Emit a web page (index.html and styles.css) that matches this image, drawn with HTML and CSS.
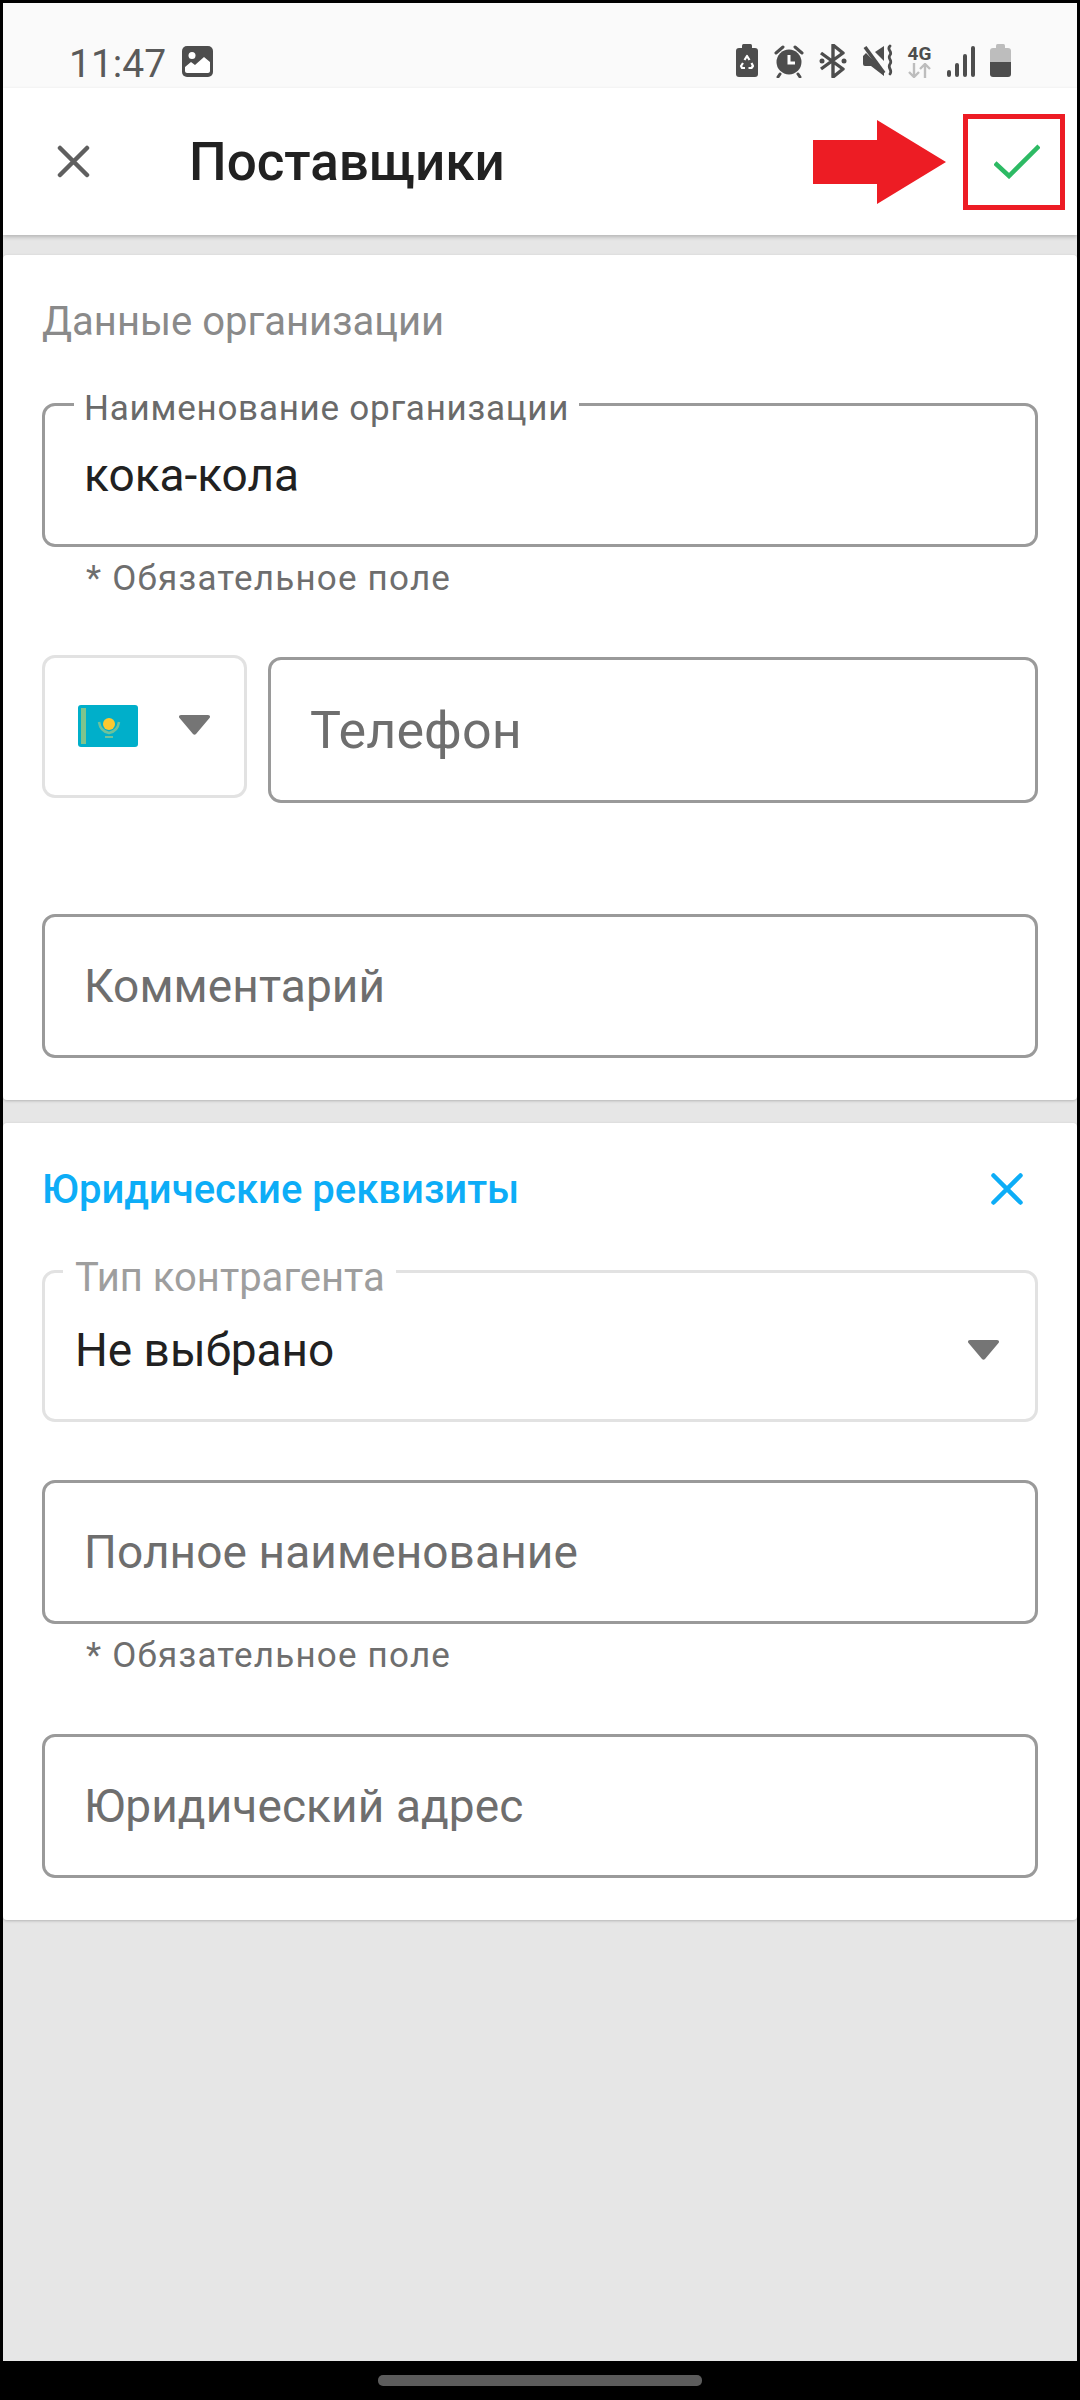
FILE: index.html
```html
<!DOCTYPE html>
<html>
    <head>
        <meta name="viewport" content="width=device-width, initial-scale=1.0">
        <meta charset="utf-8">
        <title>Поставщики</title>
        <link rel="stylesheet" href="styles.css">
    </head>
    <body>
        <div class="screen">
            <div class="statusbar">
                <span class="clock">11:47</span>
                <svg class="ic-image" width="31" height="31" viewBox="0 0 31 31">
                    <rect width="31" height="31" rx="5" fill="#4d4d4d"/>
                    <circle cx="10" cy="9.500" r="3.500" fill="#fff"/>
                    <path d="M3 25v-4l6-5 4 3 9-8 6 5v9c0 1-1 2-2 2H5c-1 0-2-1-2-2z" fill="#fff"/>
                </svg>
                <div class="status-icons">
                    <svg width="22" height="34" viewBox="0 0 22 34">
                        <rect x="6" y="0" width="10" height="6" rx="1.500" fill="#4d4d4d"/>
                        <rect x="0" y="4" width="22" height="29" rx="3" fill="#4d4d4d"/>
                        <path d="M8.500 16l2.500-4 2.500 4M15.500 19l1.500 3-1.500 2h-3M9 24H6l-1-2 2-3" fill="none" stroke="#fff" stroke-width="2.200" stroke-linejoin="round"/>
                    </svg>
                    <svg width="30" height="34" viewBox="0 0 30 34">
                        <circle cx="15" cy="18" r="12.500" fill="#4d4d4d"/>
                        <path d="M15 11v8h6" fill="none" stroke="#fff" stroke-width="3"/>
                        <path d="M2 9l7-6M28 9l-7-6M6 30l-2 3M24 30l2 3" fill="none" stroke="#4d4d4d" stroke-width="3" stroke-linecap="round"/>
                    </svg>
                    <svg width="28" height="34" viewBox="0 0 28 34">
                        <path d="M2 9l22 16-10 8V1l10 8L2 25" fill="none" stroke="#4d4d4d" stroke-width="3.400" stroke-linejoin="round"/>
                        <circle cx="3" cy="17" r="2.500" fill="#4d4d4d"/>
                        <circle cx="25" cy="17" r="2.500" fill="#4d4d4d"/>
                    </svg>
                    <svg width="30" height="34" viewBox="0 0 30 34">
                        <path d="M12 8l9-6v15z" fill="#4d4d4d"/>
                        <path d="M3 9L0 12v8a2 2 0 0 0 2 2h6l13 10v-5z" fill="#4d4d4d"/>
                        <path d="M2 3l19 26" stroke="#4d4d4d" stroke-width="3.600"/>
                        <path d="M27 2c-4 4 3 5 0 9s3 5 0 9 3 6 0 10" fill="none" stroke="#4d4d4d" stroke-width="2.800" stroke-linecap="round"/>
                    </svg>
                    <div class="net">
                        <span class="net-label">4G</span>
                        <svg width="23" height="15" viewBox="0 0 23 15">
                            <path d="M6 0v14M1 9l5 5 5-5M17 15V1M12 6l5-5 5 5" fill="none" stroke="#bdbdbd" stroke-width="2.400"/>
                        </svg>
                    </div>
                    <svg width="28" height="34" viewBox="0 0 28 34">
                        <rect x="0" y="26" width="4" height="7" rx="2" fill="#4d4d4d"/>
                        <rect x="8" y="19" width="4" height="14" rx="2" fill="#4d4d4d"/>
                        <rect x="16" y="10" width="4" height="23" rx="2" fill="#4d4d4d"/>
                        <rect x="24" y="2" width="4" height="31" rx="2" fill="#4d4d4d"/>
                    </svg>
                    <svg width="21" height="34" viewBox="0 0 21 34">
                        <rect x="6" y="0" width="9" height="6" rx="1.500" fill="#bdbdbd"/>
                        <path d="M3 4h15a3 3 0 0 1 3 3v11H0V7a3 3 0 0 1 3-3z" fill="#bdbdbd"/>
                        <path d="M0 18h21v12a3 3 0 0 1-3 3H3a3 3 0 0 1-3-3z" fill="#4d4d4d"/>
                    </svg>
                </div>
            </div>

            <div class="appbar">
                <svg class="close" width="33" height="33" viewBox="0 0 33 33">
                    <path d="M3 3l27 27M30 3L3 30" stroke="#5f5f5f" stroke-width="4.500" stroke-linecap="round"/>
                </svg>
                <div class="title">Поставщики</div>
                <svg class="arrow" width="134" height="84" viewBox="0 0 134 84">
                    <path d="M1 20h64V0l69 42-69 42V64H1z" fill="#ed1c24"/>
                </svg>
                <div class="save">
                    <svg width="46" height="35" viewBox="0 0 46 35">
                        <path d="M1 19l14 13L45 2" fill="none" stroke="#2dba64" stroke-width="4.500"/>
                    </svg>
                </div>
            </div>

            <div class="card first">
                <div class="heading">Данные организации</div>
                <div class="field org">
                    <label class="float">Наименование организации</label>
                    <span class="value">кока-кола</span>
                </div>
                <div class="hint">* Обязательное поле</div>
                <div class="phone-row">
                    <div class="country">
                        <svg width="60" height="42" viewBox="0 0 60 42">
                            <rect width="60" height="42" rx="3" fill="#00afca"/>
                            <rect x="3" y="3" width="5" height="36" fill="#7fc48c"/>
                            <circle cx="31" cy="19" r="6" fill="#fdc82f"/>
                            <path d="M21 17c1 7 5 10 10 11 5-1 9-4 10-11" fill="none" stroke="#6fc29a" stroke-width="2.500"/>
                            <path d="M27 32h8" stroke="#6fc29a" stroke-width="2"/>
                        </svg>
                        <svg class="caret" width="31" height="20" viewBox="0 0 31 20">
                            <path d="M2 0h27c2 0 2.500 2 1.500 3L17 19c-1 1-2 1-3 0L.5 3C-.5 2 0 0 2 0z" fill="#757575"/>
                        </svg>
                    </div>
                    <div class="field phone"><span class="placeholder">Телефон</span></div>
                </div>
                <div class="field comment"><span class="placeholder">Комментарий</span></div>
            </div>

            <div class="card second">
                <div class="legal-head">
                    <span class="legal-title">Юридические реквизиты</span>
                    <svg width="32" height="32" viewBox="0 0 32 32">
                        <path d="M2.500 2.500l27 27M29.500 2.500l-27 27" stroke="#0dadf7" stroke-width="4.500" stroke-linecap="round"/>
                    </svg>
                </div>
                <div class="field select">
                    <label class="float muted">Тип контрагента</label>
                    <span class="value">Не выбрано</span>
                    <svg class="caret" width="31" height="20" viewBox="0 0 31 20">
                        <path d="M2 0h27c2 0 2.500 2 1.500 3L17 19c-1 1-2 1-3 0L.5 3C-.5 2 0 0 2 0z" fill="#757575"/>
                    </svg>
                </div>
                <div class="field fullname"><span class="placeholder">Полное наименование</span></div>
                <div class="hint">* Обязательное поле</div>
                <div class="field address"><span class="placeholder">Юридический адрес</span></div>
            </div>
        </div>
        <div class="navbar"><div class="home"></div></div>
    </body>
</html>
```

FILE: styles.css
```css
*{
    box-sizing:border-box;
}
html,body{
    margin:0;
    height:2400px;
    background-color:black;
    overflow:hidden;
}
body{
    padding:3px 3px 0;
    font-family:Roboto,"Noto Sans",sans-serif;
}
.screen{
    height:2358px;
    background-color:#e6e6e6;
    display:flex;
    flex-direction:column;
}

/* status bar */
.statusbar{
    height:85px;
    flex:none;
    background-color:#fafafa;
    display:flex;
    align-items:flex-start;
    padding:41px 0 0 66px;
}
.clock{
    width:96px;
    font-size:39px;
    line-height:40px;
    color:#5a5a5a;
}
.ic-image{
    margin:2px 0 0 17px;
}
.status-icons{
    margin-left:auto;
    margin-right:66px;
    display:flex;
    gap:15.5px;
    color:#4d4d4d;
}
.net{
    width:23px;
    height:34px;
    display:flex;
    flex-direction:column;
    align-items:center;
}
.net-label{
    font-size:19px;
    line-height:19px;
    font-weight:700;
    color:#4d4d4d;
}

/* app bar */
.appbar{
    height:147px;
    flex:none;
    background-color:white;
    display:flex;
    align-items:center;
    padding-left:54px;
    box-shadow:0 2px 4px rgba(0,0,0,.22);
    position:relative;
}
.title{
    margin-left:99px;
    font-size:53px;
    font-weight:500;
    color:#212121;
}
.arrow{
    margin-left:auto;
    margin-right:17px;
}
.save{
    width:102px;
    height:96px;
    margin-right:12px;
    padding-left:5px;
    border:5px solid #ed1c24;
    display:flex;
    align-items:center;
    justify-content:center;
}

/* cards */
.card{
    background-color:white;
    border-radius:4px;
    box-shadow:0 1px 3px rgba(0,0,0,.22);
    padding:45px 39px 42px;
}
.first{
    margin-top:20px;
}
.second{
    margin-top:23px;
}
.heading{
    font-size:40px;
    line-height:44px;
    color:#8a8a8a;
    margin-bottom:59px;
}
.legal-head{
    height:44px;
    display:flex;
    align-items:center;
    justify-content:space-between;
    padding:0 15px 2px 0;
    margin-bottom:58px;
}
.legal-title{
    font-size:40px;
    font-weight:500;
    color:#0dadf7;
}

/* form fields */
.field{
    position:relative;
    display:flex;
    align-items:center;
    border:3px solid #9a9a9a;
    border-radius:13px;
    padding-left:39px;
    background-color:white;
}
.float{
    position:absolute;
    left:29px;
    top:-17px;
    padding:0 10px 0 10px;
    background-color:white;
    font-size:35px;
    line-height:40px;
    letter-spacing:.75px;
    color:#6a6a6a;
}
.float.muted{
    left:18px;
    top:-17px;
    padding:0 11px 0 12px;
    font-size:40px;
    line-height:44px;
    letter-spacing:0;
    color:#9e9e9e;
}
.value{
    font-size:46px;
    color:#212121;
}
.placeholder{
    font-size:46px;
    color:#6e6e6e;
    letter-spacing:.1px;
}
.org{
    height:144px;
}
.hint{
    margin:12px 0 0 44px;
    font-size:35px;
    line-height:40px;
    letter-spacing:1.2px;
    color:#6e6e6e;
}
.phone-row{
    margin-top:56px;
    display:flex;
    align-items:flex-start;
    gap:21px;
}
.country{
    width:205px;
    height:143px;
    flex:none;
    border:3px solid #e2e2e2;
    border-radius:13px;
    display:flex;
    align-items:flex-start;
    padding:47px 0 0 33px;
    gap:41px;
}
.country .caret{
    margin-top:10px;
}
.phone{
    flex:1;
    height:146px;
    margin-top:2px;
}
.phone .placeholder{
    font-size:52px;
}
.comment{
    height:144px;
    margin-top:111px;
}
.select{
    height:152px;
    border-color:#e2e2e2;
    padding:8px 36px 0 30px;
    justify-content:space-between;
}
.fullname{
    height:144px;
    margin-top:58px;
}
.address{
    height:144px;
    margin-top:58px;
}

/* nav bar */
.navbar{
    height:39px;
    display:flex;
    justify-content:center;
    padding-top:14px;
}
.home{
    width:324px;
    height:11px;
    border-radius:5px;
    background-color:#5c5c5c;
}
```
